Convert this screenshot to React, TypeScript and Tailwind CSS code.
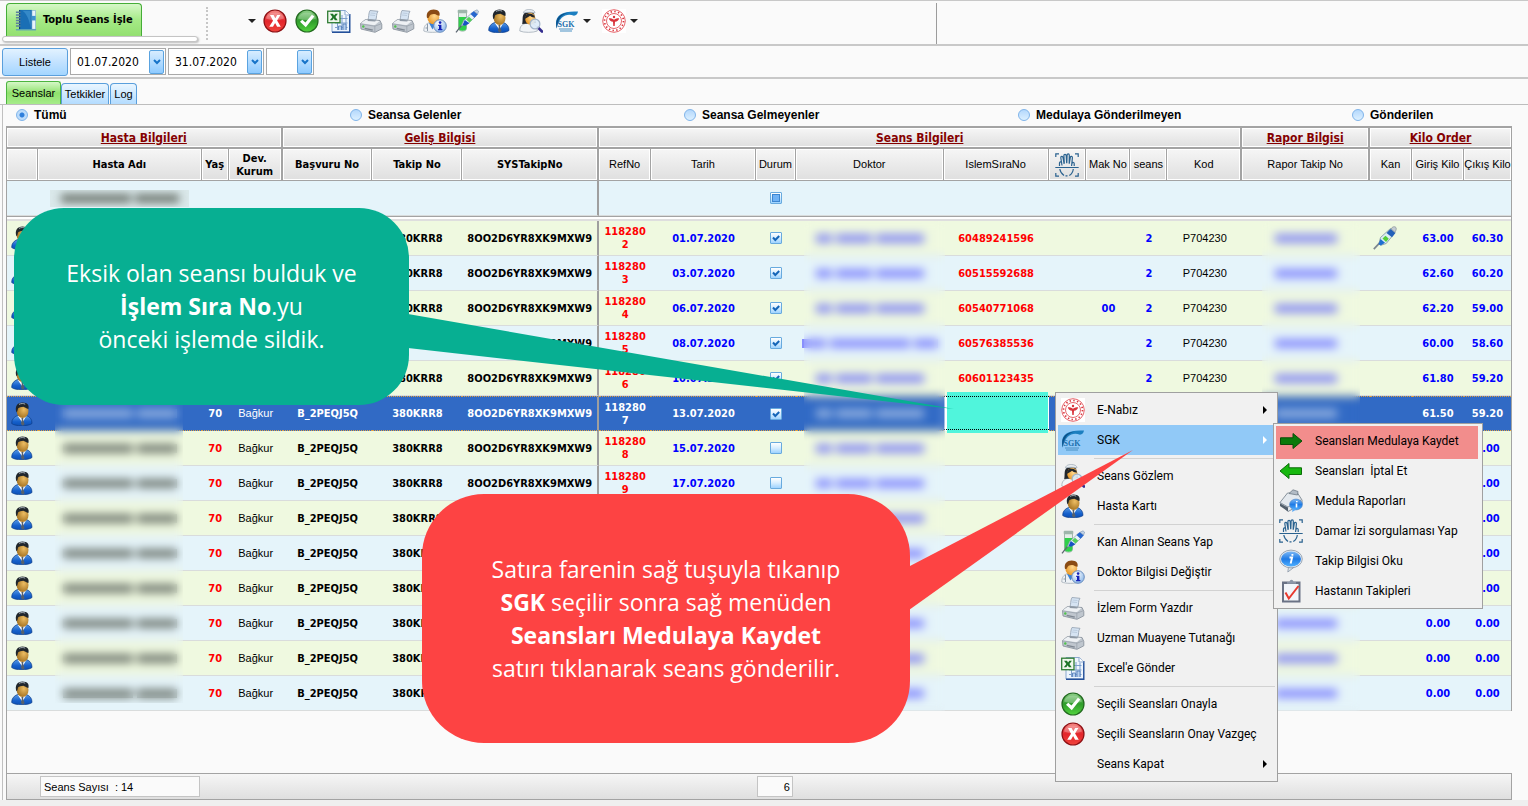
import type { ReactNode } from "react";

const tahoma = "font-['DejaVu_Sans_Condensed','Noto_Sans',sans-serif]";
const sans = "font-['Liberation_Sans',sans-serif]";
const segoe = "font-['Open_Sans','Noto_Sans',sans-serif]";
const menuFont = "font-['Roboto','Noto_Sans',sans-serif]";

/* ---------- Icons ---------- */

function Svg({ children, size = "size-6" }: { children: ReactNode; size?: string }) {
  return (
    <svg viewBox="0 0 24 24" className={`${size} shrink-0`} aria-hidden="true">
      {children}
    </svg>
  );
}

function IconDefs() {
  return (
    <svg className="absolute size-0" aria-hidden="true">
      <defs>
        <linearGradient id="gRed" x1="0" y1="0" x2="0" y2="1">
          <stop offset="0" stopColor="#f58a86" />
          <stop offset="0.5" stopColor="#e3252b" />
          <stop offset="1" stopColor="#f0443c" />
        </linearGradient>
        <linearGradient id="gGreen" x1="0" y1="0" x2="0" y2="1">
          <stop offset="0" stopColor="#8fd08a" />
          <stop offset="0.5" stopColor="#2f9c2b" />
          <stop offset="1" stopColor="#52d43e" />
        </linearGradient>
        <linearGradient id="gBlue" x1="0" y1="0" x2="0" y2="1">
          <stop offset="0" stopColor="#5a9be4" />
          <stop offset="0.6" stopColor="#1560cc" />
          <stop offset="1" stopColor="#0b4fb4" />
        </linearGradient>
        <radialGradient id="gSkin" cx="0.6" cy="0.4" r="0.7">
          <stop offset="0" stopColor="#edbd62" />
          <stop offset="1" stopColor="#9c6a1a" />
        </radialGradient>
        <radialGradient id="gFace" cx="0.6" cy="0.4" r="0.7">
          <stop offset="0" stopColor="#ffd890" />
          <stop offset="1" stopColor="#e8921c" />
        </radialGradient>
        <radialGradient id="gInfo" cx="0.4" cy="0.3" r="0.8">
          <stop offset="0" stopColor="#ffffff" />
          <stop offset="1" stopColor="#7fb0e6" />
        </radialGradient>
        <linearGradient id="gBubble" x1="0" y1="0" x2="0" y2="1">
          <stop offset="0" stopColor="#7db8f5" />
          <stop offset="0.5" stopColor="#1f7be6" />
          <stop offset="1" stopColor="#4fb0ff" />
        </linearGradient>
      </defs>
    </svg>
  );
}

const CancelIcon = () => (
  <Svg>
    <circle cx="12" cy="12" r="11" fill="url(#gRed)" stroke="#8d1014" strokeWidth="1.2" />
    <path d="M3 9.500a9.300 8 0 0 1 18 0q-9 3-18 0" fill="#fff" opacity="0.25" />
    <path d="M7 6h3.600l1.700 3.300L14.200 6h3.200l-3.300 5.600 3.700 6.200h-3.700l-2-3.700-2.100 3.700H6.200l3.800-6.100z" fill="#fff" />
  </Svg>
);

const ApproveIcon = () => (
  <Svg>
    <circle cx="12" cy="12" r="11" fill="url(#gGreen)" stroke="#22691f" strokeWidth="1.2" />
    <path d="M3 9.500a9.300 8 0 0 1 18 0q-9 3-18 0" fill="#fff" opacity="0.25" />
    <path d="M5 12.800l2.300-2 3.100 2.800 6.500-7.900 2.400 1.700-8.500 10.800z" fill="#fff" />
  </Svg>
);

const ExcelIcon = () => (
  <Svg>
    <path d="M5 1.500h13.500L22.500 6v17H5z" fill="#eef5fd" stroke="#8aa8cf" />
    <path d="M22.800 5v18.300H5" fill="none" stroke="#24509a" strokeWidth="1.400" />
    <path d="M18 1.500V6h4.500" fill="#fff" stroke="#8aa8cf" />
    <path d="M8 9.500h12.500M8 14h12.500M8 18.500h12.500M10.500 7v14M15 6v15M19 7v14" stroke="#7d9fcc" strokeWidth="1" />
    <path d="M11.500 21v-4h3v4M16 21v-6h3v6" fill="#b7cfee" stroke="#4d78b8" strokeWidth="0.800" />
    <rect x="0.700" y="2.200" width="12.300" height="11.500" fill="#f1f8ee" stroke="#2f7d34" strokeWidth="1.300" />
    <path d="M3 4.800h3l1 1.800 1.400-1.800h2.500L8.400 8l2.300 3.300H7.900L6.700 9.200l-1.400 2.100H2.800L5.400 8z" fill="#1d7527" />
  </Svg>
);

const PrinterIcon = () => (
  <Svg>
    <path d="M9 10.500c1-2 .3-6 2-9l8 .8c-2 2.500-1 6-2.300 9z" fill="#d6e4f3" stroke="#98a6b5" strokeWidth="0.900" />
    <path d="M11.500 4l5 .5M11 6l5 .5" stroke="#b4c5d8" strokeWidth="0.800" />
    <path d="M1.500 14.500L6.500 10.500l14.500 1 1.800 4v4.300L16 23.300 2 20z" fill="#bfc6ce" stroke="#8b949e" strokeWidth="0.900" />
    <path d="M1.800 14.300l5-3.500L20.700 12l-5 4.300z" fill="#eef1f4" />
    <path d="M9 10.500l8 .7-.8 1.300-7.700-.6z" fill="#8d98a4" />
    <path d="M15.800 16.300v6.400M2 15l13.800 2.200 6.700-2.500" fill="none" stroke="#9ba3ad" strokeWidth="0.800" />
    <path d="M5.500 20l8 1.800.5-1.300-8-1.700z" fill="#7e8791" />
    <circle cx="4.300" cy="17.500" r="1.200" fill="#4fc24c" />
  </Svg>
);

const PersonIcon = () => (
  <Svg>
    <path d="M1.700 21.500C1.700 17 4 15 7.500 13.500h9c3.500 1.500 5.500 3.500 5.500 8-3.500 3-17 3-20.300 0z" fill="url(#gBlue)" stroke="#0b3b86" strokeWidth="0.700" />
    <path d="M7.700 13.800l4.700 7 4-7z" fill="#fff" />
    <path d="M11.300 16h2.200l-.4 1.700 1.500 4.300-1.700 1.700-2-1.700.9-4.300z" fill="#56606c" />
    <ellipse cx="12.600" cy="9" rx="5.900" ry="7" fill="url(#gSkin)" />
    <path d="M6.500 10.500C4.300 4.500 7.500.5 12.500.5c5 0 7 2.800 5.900 6.500-2.200-.3-3.700-1.900-5-2.200-2.200.4-4.300.6-5.200 1.500-.6 1.200-.5 3.200-1.700 4.200z" fill="#20262c" />
    <path d="M9 2.400c2-1.100 4.500-1.100 6.200-.2" stroke="#a7b0b8" fill="none" strokeWidth="1" />
  </Svg>
);

const InfoBadge = () => (
  <g>
    <circle cx="17" cy="17" r="6.300" fill="url(#gInfo)" stroke="#6185b8" strokeWidth="0.900" />
    <circle cx="17.100" cy="13.600" r="1.300" fill="#1522b8" />
    <path d="M15.200 15.800h3.200v4.200h1v1.300h-4.300V20h.9v-2.900h-.8z" fill="#1522b8" />
  </g>
);

const DoctorInfoIcon = () => (
  <Svg>
    <path d="M.8 22c0-5 2-7 5.500-8.500h7c3 1.500 5 3.500 5 8.500-4 1.800-14 1.800-17.500 0z" fill="#eef2f6" stroke="#a3adb8" strokeWidth="0.800" />
    <path d="M6 14l3.500 6.500 3.500-6.500z" fill="#3b82d6" />
    <path d="M4.500 15v7M4.500 19h-2" stroke="#8b98a6" fill="none" />
    <ellipse cx="10.300" cy="8.500" rx="5.900" ry="6.800" fill="url(#gFace)" />
    <path d="M4 9C2.700 3.500 6.500.5 10.700.6c4.700.1 6.800 2.700 5.800 6.200-2.200-.2-3.200-1.700-5.300-1.900-2.700-.1-4.700.7-5.400 3.900z" fill="#8a4b14" />
    <InfoBadge />
  </Svg>
);

const TubeIcon = () => (
  <Svg>
    <path d="M3.500 3.500v16c0 3.500 8 3.500 8 0v-16z" fill="#e3efe9" stroke="#8fa69b" strokeWidth="0.800" />
    <path d="M3.700 8h7.600v11.500c0 3-7.600 3-7.600 0z" fill="#2fd04a" />
    <rect x="2.700" y="0.800" width="9.600" height="3.400" rx="1" fill="#9eb6ab" />
    <path d="M1 23.300l6-7.500" stroke="#5b6570" strokeWidth="1.300" />
    <path d="M6.300 16.800l2.400-5.300 8.500-8 4 3.300-8.600 8.300z" fill="#e9f4fb" stroke="#7e93a8" strokeWidth="0.700" />
    <path d="M7.500 16l2.300-5 4.600 3.300-4.400 2.500z" fill="#1752c4" />
    <path d="M11 10.500l3-2.700 3.300 3-2.800 2.700z" fill="#55cf5a" />
    <path d="M15.500 5l3.400-3 4 3.300-3.400 3.500z" fill="#2566cf" />
    <path d="M19 2.300l3-1.500 1.600 1.400-1 2.800z" fill="#c3d4e8" stroke="#7890ad" strokeWidth="0.600" />
  </Svg>
);

const NurseIcon = () => (
  <Svg>
    <path d="M.8 22c0-4.500 2-6.500 5.500-7.500h6.500c3.500 1 5.500 3 5.500 7.500-4 1.800-13.500 1.800-17.500 0z" fill="#f1f4f7" stroke="#a3adb8" strokeWidth="0.800" />
    <path d="M3.200 15C4.300 10 2.500 7 6 3.500h8c3 3.500 1.700 7.500 3.200 10.500z" fill="#22262c" />
    <path d="M4.500 4c0-2.300 3-3.700 6-3.500 3 0 5.500 1.300 5.500 3.500-2.800-1-8.500-1-11.500 0z" fill="#e8edf2" stroke="#9aa5b0" strokeWidth="0.700" />
    <ellipse cx="11.300" cy="9.800" rx="5.100" ry="6" fill="url(#gFace)" />
    <path d="M5.800 10c.3-3.500 2-5 4-5.500 2.500.3 5.500 1 6.300 4-2.500.3-4.100-.8-5.100-1.700-1.200.9-3 2-5.200 3.200z" fill="#22262c" />
    <path d="M19 18.500l4 4" stroke="#332c8e" strokeWidth="2.600" strokeLinecap="round" />
    <circle cx="16" cy="15" r="4.900" fill="#dcebf8" fillOpacity="0.900" stroke="#a3b5c9" strokeWidth="1.200" />
  </Svg>
);

const SgkIcon = () => (
  <Svg>
    <path d="M1.800 19.500C-1.500 8 5 1.500 23 2.500c-.5 2.600-1.700 4-4 4.200C12 4.300 4.500 6.500 1.800 19.500z" fill="#1c7fc0" />
    <path d="M1.800 19.500C-.5 10.500 4 4.500 14 3.600 6.500 5.500 2.500 10 1.800 19.500z" fill="#0d4f86" />
    <text x="2.500" y="18" fontSize="8" fontWeight="bold" fontFamily="Liberation Serif, serif" fill="#1b70ae">
      SGK
    </text>
    <path d="M4 20h14M5 22h12" stroke="#4a91c4" strokeWidth="1" />
  </Svg>
);

const MinistryIcon = () => (
  <Svg>
    <rect width="24" height="24" fill="#fff" />
    <circle cx="12" cy="12" r="11.300" fill="none" stroke="#e2555b" strokeWidth="0.900" />
    <circle cx="12" cy="12" r="9.500" fill="none" stroke="#d9343c" strokeWidth="1.700" strokeDasharray="1.400 2.330" />
    <circle cx="12" cy="12" r="7.500" fill="none" stroke="#e2555b" strokeWidth="0.900" />
    <path d="M6.800 9.300c2 0 3.700.3 5.200 1.400 1.500-1.100 3.200-1.400 5.200-1.400-.6 2.200-2 3.200-4.200 3.500L12.700 17h-1.400L11 12.800c-2.200-.3-3.600-1.300-4.200-3.500z" fill="#d9343c" />
    <circle cx="12" cy="8" r="1.200" fill="#d9343c" />
  </Svg>
);

const HandIcon = () => (
  <Svg>
    <g fill="none" stroke="#2a628f" strokeWidth="1.200">
      <path d="M.8 4V.8H4M20 .8h3.200V4M.8 20v3.200H4M20 23.200h3.200V20" />
      <path d="M.3 14.500h23.400" strokeWidth="1" />
      <path d="M4.500 13V10c0-1.600 2-1.600 2.300 0M7 12.500L5.800 4.800c-.1-1.700 1.900-1.900 2.200-.3l1.100 6.300M9.300 10.500L8.900 2.600c0-1.700 2.200-1.700 2.300 0l.5 7.700M11.800 10.300l.3-8.200c.1-1.700 2.200-1.600 2.200.1l-.1 8.500M14.300 10.500l1-6.200c.3-1.600 2.300-1.200 2.100.4l-.8 8.300M17 10.500c.5-1.600 2.300-1.200 2.200.3v2.200" />
      <path d="M4.800 16c.5 3.300 2.200 5 4.200 6.500M18.300 16c-.3 3-1.500 5-4 6.500M10.500 22.800h2" />
    </g>
  </Svg>
);

const ThermometerIcon = () => (
  <Svg>
    <path d="M.8 23.200l7-7.600" stroke="#7c868f" strokeWidth="1.700" />
    <path d="M6 17.500l1.500-6L17.500 2.500l4.700 4-9 11-5.500 1.800z" fill="#dceef3" stroke="#6d8593" strokeWidth="0.700" />
    <path d="M5.500 18.300l2-5.300 4.500 3.800-4.300 2.700z" fill="#1f6fd0" />
    <path d="M9.500 12.500l3-2.800 3.300 3-2.800 3.200z" fill="#55cf3a" />
    <path d="M13.500 7l4-4 4.900 4-3.400 4.300z" fill="#2361b9" />
    <path d="M18.300 3c.6-2.800 4.400-3 4.900-.9.300 1.500-.5 2.800-1.300 4.200z" fill="#c4ccd3" stroke="#7a858f" strokeWidth="0.600" />
  </Svg>
);

const ArrowIcon = ({ left = false }: { left?: boolean }) => (
  <Svg>
    {left ? (
      <path d="M1 12l9-7.500v4.300h12.500v6.700H10v4z" fill="#17b80f" stroke="#0b6d08" />
    ) : (
      <path d="M23 12l-9-7.500v4.300H1.500v6.700H14v4z" fill="#0a7a0a" stroke="#0b4d08" />
    )}
  </Svg>
);

const ReportsIcon = () => (
  <Svg>
    <path d="M1 13.500L8.500 4h10l4.500 7v4L9 22.500z" fill="#e4e9ee" stroke="#6f7b87" strokeWidth="0.800" />
    <path d="M1 13.500L9 18l13-7" fill="none" stroke="#8b97a3" />
    <path d="M1 14.500v2.500l8 5.500v-4z" fill="#525f6c" />
    <path d="M10 4.500L14 .8l5 1.700-.5 3.500z" fill="#b3bcc6" stroke="#6f7b87" strokeWidth="0.800" />
    <ellipse cx="17" cy="15.500" rx="6.400" ry="5.400" fill="url(#gBubble)" stroke="#4f87c9" strokeWidth="0.700" />
    <path d="M13.500 19l-.3 4 4-2.500z" fill="#5aaaf5" />
    <path d="M17.800 12v1.300M17.500 14.500v4" stroke="#fff" strokeWidth="1.600" />
  </Svg>
);

const BubbleIcon = () => (
  <Svg>
    <path d="M9.500 18l-.7 5 6-4.500z" fill="#dfe6ee" stroke="#8a97a6" strokeWidth="0.800" />
    <ellipse cx="12" cy="10" rx="11.300" ry="8.900" fill="#dfe6ee" stroke="#8a97a6" strokeWidth="0.800" />
    <ellipse cx="12" cy="10" rx="10" ry="7.600" fill="url(#gBubble)" />
    <path d="M10.500 8.500h2.600l-1.200 5h1M13.400 5v1.800" fill="none" stroke="#fff" strokeWidth="1.900" />
  </Svg>
);

const ClipboardIcon = () => (
  <Svg>
    <rect x="3" y="2.500" width="18.500" height="21" fill="#6a7285" />
    <rect x="5" y="5" width="14.500" height="16.500" fill="#f2f5fa" />
    <path d="M8 4.700V3h2.500c.3-3 3.700-3 4 0H17v1.700z" fill="#8c96a8" />
    <path d="M6.500 13.500l3.300 6L19.500 7" fill="none" stroke="#e8392f" strokeWidth="2" />
  </Svg>
);

const NotebookIcon = () => (
  <Svg size="size-[22px]">
    <rect x="4.500" y="1" width="14" height="21" fill="#1a6fb5" />
    <rect x="18.500" y="1.500" width="4" height="20.500" fill="#e9f3fb" stroke="#6ea5d0" strokeWidth="0.600" />
    <path d="M18.500 7.500h4v5h-4z" fill="#3f94d0" />
    <path d="M5 1v21" stroke="#083e6e" strokeWidth="1.200" />
    <path d="M1 3.500h5M1 6.500h5M1 9.500h5M1 12.500h5M1 15.500h5M1 18.500h5" stroke="#5c7f9e" strokeWidth="1.500" />
    <path d="M1 22.700h22" stroke="#4e93c6" strokeWidth="1.200" />
    <path d="M8 2c4 2 8 10 9 19V2z" fill="#4fa3dc" opacity="0.500" />
  </Svg>
);

const Caret = () => (
  <svg viewBox="0 0 8 4" className="h-1 w-2 shrink-0" aria-hidden="true">
    <path d="M0 0h8L4 4z" fill="#222" />
  </svg>
);

/* ---------- Small controls ---------- */

function ToolButton({ label, children }: { label: string; children: ReactNode }) {
  return (
    <button type="button" aria-label={label} className="flex h-8 w-8 items-center justify-center">
      {children}
    </button>
  );
}

function DropMark() {
  return (
    <span className="pointer-events-none absolute top-0.5 right-0.5 flex h-6 w-[15px] items-center justify-center rounded-[2px] border border-[#5aa3e0] bg-linear-to-b from-[#d8edff] via-[#b4dcff] to-[#8ecaff]">
      <svg viewBox="0 0 8 6" className="h-1.5 w-2" aria-hidden="true">
        <path d="M1 1l3 3 3-3" fill="none" stroke="#1673c9" strokeWidth="2" />
      </svg>
    </span>
  );
}

function DateBox({ label, value }: { label: string; value: string }) {
  return (
    <label className="relative block">
      <input
        type="text"
        aria-label={label}
        defaultValue={value}
        className={`${tahoma} block h-[27px] w-24 border border-[#a9a9a9] bg-white px-1.5 text-[12px] text-black`}
      />
      <DropMark />
    </label>
  );
}

type CheckState = "on" | "off" | "mixed";

function Check({ state, label }: { state: CheckState; label: string }) {
  return (
    <span className="relative mx-auto block size-3">
      <input
        type="checkbox"
        aria-label={label}
        defaultChecked={state === "on"}
        className="block size-3 appearance-none rounded-[1px] border border-[#68aade] bg-linear-to-b from-white via-[#d6edff] to-[#9ed3ff]"
      />
      {state === "on" && (
        <svg viewBox="0 0 12 12" className="pointer-events-none absolute inset-0" aria-hidden="true">
          <path d="M3 5.500l2.300 2.500L9.200 4" fill="none" stroke="#1565b8" strokeWidth="2" />
        </svg>
      )}
      {state === "mixed" && (
        <span className="pointer-events-none absolute inset-[2px] border border-[#3d86d0] bg-[#6fb2f5]" />
      )}
    </span>
  );
}

/* Redacted value: soft bars standing in for words */
function Redacted({ tone, words }: { tone: "dark" | "blue" | "light"; words: string[] }) {
  const color = tone === "dark" ? "bg-[#606860]/85" : tone === "blue" ? "bg-[#3c3cff]/55" : "bg-white/45";
  return (
    <span className="flex items-center justify-center gap-1">
      {words.map((w, i) => (
        <span key={i} className={`h-[9px] ${w} ${color}`} />
      ))}
    </span>
  );
}

/* ---------- Data ---------- */

interface Row {
  yas?: string;
  kurum?: string;
  basvuru?: string;
  sys?: string;
  ref?: string;
  date?: string;
  done?: boolean;
  islem?: string;
  mak?: string;
  seans?: string;
  kod?: string;
  kan?: boolean;
  giris?: string;
  cikis: string;
}

const takip = "380KRR8";
const sys = "8OO2D6YR8XK9MXW9";
const person = { yas: "70", kurum: "Bağkur", basvuru: "B_2PEQJ5Q" };
const session = { sys, done: true, seans: "2", kod: "P704230" };

const rows: Row[] = [
  { ...session, ref: "1182802", date: "01.07.2020", islem: "60489241596", kan: true, giris: "63.00", cikis: "60.30" },
  { ...session, ref: "1182803", date: "03.07.2020", islem: "60515592688", giris: "62.60", cikis: "60.20" },
  { ...session, ref: "1182804", date: "06.07.2020", islem: "60540771068", mak: "00", giris: "62.20", cikis: "59.00" },
  { ...session, ref: "1182805", date: "08.07.2020", islem: "60576385536", giris: "60.00", cikis: "58.60" },
  { ...session, ref: "1182806", date: "10.07.2020", islem: "60601123435", giris: "61.80", cikis: "59.20" },
  { ...person, sys, ref: "1182807", date: "13.07.2020", done: true, giris: "61.50", cikis: "59.20" },
  { ...person, sys, ref: "1182808", date: "15.07.2020", cikis: "0.00" },
  { ...person, sys, ref: "1182809", date: "17.07.2020", cikis: "0.00" },
  { ...person, cikis: "0.00" },
  { ...person, cikis: "0.00" },
  { ...person, cikis: "0.00" },
  { ...person, giris: "0.00", cikis: "0.00" },
  { ...person, giris: "0.00", cikis: "0.00" },
  { ...person, giris: "0.00", cikis: "0.00" },
];

const SELECTED = 5;
const colWidths = [31, 164, 27, 54, 90, 90, 137, 52, 105, 40, 148, 105, 38, 44, 37, 75, 128, 42, 52, 47];

const groups = [
  { title: "Hasta Bilgileri", span: 4 },
  { title: "Geliş Bilgisi", span: 3 },
  { title: "Seans Bilgileri", span: 9 },
  { title: "Rapor Bilgisi", span: 1 },
  { title: "Kilo Order", span: 3 },
];

const heads: { title: string; bold?: boolean; thick?: boolean }[] = [
  { title: "" },
  { title: "Hasta Adı", bold: true },
  { title: "Yaş", bold: true },
  { title: "Dev. Kurum", bold: true, thick: true },
  { title: "Başvuru No", bold: true },
  { title: "Takip No", bold: true },
  { title: "SYSTakipNo", bold: true, thick: true },
  { title: "RefNo" },
  { title: "Tarih" },
  { title: "Durum" },
  { title: "Doktor" },
  { title: "IslemSıraNo" },
  { title: "hand" },
  { title: "Mak No" },
  { title: "seans" },
  { title: "Kod", thick: true },
  { title: "Rapor Takip No", thick: true },
  { title: "Kan" },
  { title: "Giriş Kilo" },
  { title: "Çıkış Kilo" },
];

function SessionRow({ row, index }: { row: Row; index: number }) {
  const sel = index === SELECTED;
  const line = sel
    ? "relative h-[35px] border-t border-b border-dotted border-[#e0a040] p-0"
    : "relative h-[35px] border-b border-[#d9dcdc] p-0";
  const red = sel ? "text-white" : "text-[#ff0000]";
  const blue = sel ? "text-white" : "text-[#0000ff]";
  const patch = "absolute top-0 z-10 h-[490px] backdrop-blur-[5px]";
  const first = index === 0;
  const bg = sel ? "bg-[#316ac5] text-white" : index % 2 === 0 ? "bg-[#eff9e0] text-black" : "bg-[#e5f4fa] text-black";
  return (
    <tr className={`${bg} text-center text-[11px] leading-[13px] font-bold`}>
      <td className={line}>
        <span className="flex justify-center">
          <PersonIcon />
        </span>
      </td>
      <td className={line}>
        <span className="block">
          <Redacted tone={sel ? "light" : "dark"} words={["w-[70px]", "w-10"]} />
        </span>
        {first && <span className="absolute top-0 left-[17px] z-10 h-[482px] w-32 backdrop-blur-[5px]" />}
      </td>
      <td className={`${line} ${red}`}>{row.yas}</td>
      <td className={`${line} ${sans} font-normal`}>{row.kurum}</td>
      <td className={line}>{row.basvuru}</td>
      <td className={line}>{takip}</td>
      <td className={`${line} border-r-2 border-r-[#9f9f9f] [border-right-style:solid]`}>{row.sys}</td>
      <td className={`${line} ${red} break-all`}>
        <span className="mx-auto block w-11">{row.ref}</span>
      </td>
      <td className={`${line} ${blue}`}>{row.date}</td>
      <td className={line}>
        <Check state={row.done ? "on" : "off"} label={`Durum ${index + 1}`} />
      </td>
      <td className={line}>
        <Redacted tone={sel ? "light" : "blue"} words={index === 3 ? ["w-6", "w-20", "w-6"] : ["w-4", "w-9", "w-12"]} />
        {first && <span className={`${patch} left-2 w-[141px]`} />}
      </td>
      {sel ? (
        <td className="relative h-[35px] bg-white p-0">
          <span className="absolute -top-1 right-px -bottom-[2px] left-[3px] bg-[#50f5dc]" />
          <span className="absolute inset-x-0 top-0 bottom-px border-y border-dotted border-black" />
        </td>
      ) : (
        <td className={`${line} ${red}`}>{row.islem}</td>
      )}
      <td className={line} />
      <td className={`${line} ${blue}`}>{row.mak}</td>
      <td className={`${line} ${blue}`}>{row.seans}</td>
      <td className={`${line} ${sans} font-normal`}>{row.kod}</td>
      <td className={line}>
        <Redacted tone={sel ? "light" : "blue"} words={["w-[62px]"]} />
        {first && <span className={`${patch} left-5 w-[98px]`} />}
      </td>
      <td className={line}>
        {row.kan && (
          <span className="flex justify-center pr-3">
            <ThermometerIcon />
          </span>
        )}
      </td>
      <td className={`${line} ${blue}`}>{row.giris}</td>
      <td className={`${line} ${blue}`}>{row.cikis}</td>
    </tr>
  );
}

function SessionTable() {
  const cell = "bg-linear-to-b from-[#f6f6f6] to-[#dfdfdf] shadow-[inset_1px_1px_0_#fff,inset_-1px_-1px_0_#fff]";
  return (
    <table className={`${tahoma} w-full table-fixed border-separate border-spacing-0 border-t-2 border-r border-l border-[#a3a3a3]`}>
      <colgroup>
        {colWidths.map((w, i) => (
          <col key={i} style={{ width: `${(w / 1506) * 100}%` }} />
        ))}
      </colgroup>
      <thead>
        <tr>
          {groups.map((g) => (
            <th
              key={g.title}
              colSpan={g.span}
              className={`${cell} h-[21px] border-r-2 border-b-2 border-[#a3a3a3] p-0 text-[12px] leading-4 font-bold text-[#850000] underline last:border-r-0`}
            >
              {g.title}
            </th>
          ))}
        </tr>
        <tr>
          {heads.map((h, i) => (
            <th
              key={i}
              className={`${cell} h-8 border-b border-[#a3a3a3] p-0 text-[11px] leading-[13px] text-black last:border-r-0 ${h.thick ? "border-r-2" : "border-r"} ${h.bold ? "font-bold" : `${sans} font-normal whitespace-nowrap`}`}
            >
              {h.title === "hand" ? (
                <span className="flex justify-center">
                  <HandIcon />
                </span>
              ) : (
                h.title
              )}
            </th>
          ))}
        </tr>
      </thead>
      <tbody>
        <tr className="bg-[#e5f4fa]">
          <td colSpan={7} className="h-[35px] border-r-2 border-b border-r-[#9f9f9f] border-b-[#d9dcdc] p-0">
            <span className="ml-[43px] flex h-[17px] w-[139px] items-center justify-center overflow-hidden bg-[#cfdcda]/50">
              <span className="flex blur-[4px]">
                <Redacted tone="dark" words={["w-[70px]", "w-11"]} />
              </span>
            </span>
          </td>
          <td colSpan={2} className="border-b border-[#d9dcdc] p-0" />
          <td className="border-b border-[#d9dcdc] p-0">
            <Check state="mixed" label="Durum filtresi" />
          </td>
          <td colSpan={10} className="border-b border-[#d9dcdc] p-0" />
        </tr>
        <tr>
          <td colSpan={20} className="h-[5px] border-t border-b-2 border-t-[#a3a3a3] border-b-[#dedede] bg-white p-0" />
        </tr>
        {rows.map((r, i) => (
          <SessionRow key={i} row={r} index={i} />
        ))}
      </tbody>
    </table>
  );
}

/* ---------- Menus ---------- */

interface Item {
  label: string;
  icon?: ReactNode;
  more?: boolean;
  active?: boolean;
}

const mainMenu: Item[][] = [
  [
    { label: "E-Nabız", icon: <MinistryIcon />, more: true },
    { label: "SGK", icon: <SgkIcon />, more: true, active: true },
  ],
  [
    { label: "Seans Gözlem", icon: <NurseIcon /> },
    { label: "Hasta Kartı", icon: <PersonIcon /> },
  ],
  [
    { label: "Kan Alınan Seans Yap", icon: <TubeIcon /> },
    { label: "Doktor Bilgisi Değiştir", icon: <DoctorInfoIcon /> },
  ],
  [
    { label: "İzlem Form Yazdır", icon: <PrinterIcon /> },
    { label: "Uzman Muayene Tutanağı", icon: <PrinterIcon /> },
    { label: "Excel'e Gönder", icon: <ExcelIcon /> },
  ],
  [
    { label: "Seçili Seansları Onayla", icon: <ApproveIcon /> },
    { label: "Seçili Seansların Onay Vazgeç", icon: <CancelIcon /> },
    { label: "Seans Kapat", more: true },
  ],
];

const sgkMenu: Item[] = [
  { label: "Seansları Medulaya Kaydet", icon: <ArrowIcon />, active: true },
  { label: "Seansları  İptal Et", icon: <ArrowIcon left /> },
  { label: "Medula Raporları", icon: <ReportsIcon /> },
  { label: "Damar İzi sorgulaması Yap", icon: <HandIcon /> },
  { label: "Takip Bilgisi Oku", icon: <BubbleIcon /> },
  { label: "Hastanın Takipleri", icon: <ClipboardIcon /> },
];

function MenuItem({ item }: { item: Item }) {
  return (
    <button
      type="button"
      role="menuitem"
      className={`flex h-[30px] w-full items-center pr-2 text-left text-[12px] whitespace-pre text-black ${item.active ? "bg-[#91c9f7]" : ""}`}
    >
      <span className="flex w-[30px] shrink-0 justify-center">{item.icon}</span>
      <span className="flex-1 pl-[9px]">{item.label}</span>
      {item.more && (
        <svg viewBox="0 0 4 8" className="h-2 w-1" aria-hidden="true">
          <path d="M0 0l4 4-4 4z" fill={item.active ? "#fff" : "#000"} />
        </svg>
      )}
    </button>
  );
}

function ContextMenu() {
  return (
    <div role="menu" className={`${menuFont} absolute top-[392px] left-[1055px] z-20 w-[223px] border border-[#a0a0a0] bg-[#f1f1f1] p-0.5`}>
      {mainMenu.map((section, i) => (
        <div key={i}>
          {i > 0 && (
            <div className="flex h-1.5 items-center pl-9">
              <hr className="w-full border-[#d2d2d2]" />
            </div>
          )}
          {section.map((item) => (
            <MenuItem key={item.label} item={item} />
          ))}
        </div>
      ))}
    </div>
  );
}

function SgkSubmenu() {
  return (
    <div role="menu" className={`${menuFont} absolute top-[423px] left-[1273px] z-20 w-[210px] border border-[#a0a0a0] bg-[#f1f1f1] p-0.5`}>
      <div className="absolute top-0.5 left-0.5 h-[33px] w-[202px] bg-[#f28d8c]" />
      {sgkMenu.map((item) => (
        <div key={item.label} className="relative">
          <MenuItem item={{ ...item, active: false }} />
        </div>
      ))}
    </div>
  );
}

/* ---------- Callouts ---------- */

function Callouts() {
  return (
    <>
      <svg className="pointer-events-none absolute top-0 left-0 z-30 h-[806px] w-[1528px]" viewBox="0 0 1528 806" aria-hidden="true">
        <path d="M408 314L954 409 408 348z" fill="#07af92" />
        <path d="M909 566.500L1133 450 909 610z" fill="#fd4343" />
      </svg>
      <p className={`${segoe} absolute top-[208px] left-[14px] z-30 flex h-[197px] w-[395px] flex-col items-center justify-center rounded-[50px] bg-[#07af92] text-[23px] leading-[33px] text-white`}>
        <span>Eksik olan seansı bulduk ve</span>
        <span>
          <b>İşlem Sıra No</b>.yu
        </span>
        <span>önceki işlemde sildik.</span>
      </p>
      <p className={`${segoe} absolute top-[494px] left-[422px] z-30 flex h-[249px] w-[488px] flex-col items-center justify-center rounded-[62px] bg-[#fd4343] text-[23px] leading-[33px] text-white`}>
        <span>Satıra farenin sağ tuşuyla tıkanıp</span>
        <span>
          <b>SGK</b> seçilir sonra sağ menüden
        </span>
        <b>Seansları Medulaya Kaydet</b>
        <span>satırı tıklanarak seans gönderilir.</span>
      </p>
    </>
  );
}

/* ---------- Page ---------- */

const filters = ["Tümü", "Seansa Gelenler", "Seansa Gelmeyenler", "Medulaya Gönderilmeyen", "Gönderilen"];

export default function App() {
  return (
    <div className={`${sans} relative flex min-h-screen flex-col overflow-hidden bg-[#fafafa] text-[11px] text-black`}>
      <IconDefs />

      <header className="flex h-[46px] border-t border-b-2 border-[#c8c8c8] pt-0.5">
        <div className="flex w-[206px] flex-col pl-0.5">
          <button
            type="button"
            className={`${tahoma} ml-1 flex h-[33px] w-[136px] items-center gap-1.5 rounded-t-sm border border-b-0 border-[#45ad37] bg-linear-to-b from-[#d6f7c8] via-[#a5ea86] to-[#93e070] pl-2 text-[11px] font-bold whitespace-nowrap`}
          >
            <NotebookIcon />
            Toplu Seans İşle
          </button>
          <div className="h-1.5 w-[196px] rounded-sm border border-[#c4c4c4] bg-white shadow-[1px_1px_2px_#bbb]" />
        </div>
        <div className="my-1 border-l-2 border-dotted border-[#c6c6c6]" />
        <div className="flex h-9 items-center pl-10">
          <Caret />
          <div className="flex pl-[3px]">
            <ToolButton label="Vazgeç"><CancelIcon /></ToolButton>
            <ToolButton label="Onayla"><ApproveIcon /></ToolButton>
            <ToolButton label="Excel"><ExcelIcon /></ToolButton>
            <ToolButton label="Form yazdır"><PrinterIcon /></ToolButton>
            <ToolButton label="Tutanak yazdır"><PrinterIcon /></ToolButton>
            <ToolButton label="Doktor bilgisi"><DoctorInfoIcon /></ToolButton>
            <ToolButton label="Kan alınan"><TubeIcon /></ToolButton>
            <ToolButton label="Hasta kartı"><PersonIcon /></ToolButton>
            <ToolButton label="Gözlem"><NurseIcon /></ToolButton>
          </div>
          <div className="flex items-center pl-1">
            <ToolButton label="SGK"><SgkIcon /></ToolButton>
            <Caret />
          </div>
          <div className="flex items-center pl-[7px]">
            <ToolButton label="E-Nabız"><MinistryIcon /></ToolButton>
            <Caret />
          </div>
        </div>
        <div className="ml-[298px] border-l border-[#9c9c9c]" />
      </header>

      <section className="flex h-[33px] items-start gap-0.5 border-b-2 border-[#c8c8c8] pt-0.5 pl-0.5">
        <button
          type="button"
          className="h-7 w-[66px] rounded-[3px] border border-[#5a9fdc] bg-linear-to-b from-[#e2f2ff] via-[#c3e2ff] to-[#a3d6ff] text-[11px]"
        >
          Listele
        </button>
        <DateBox label="Başlangıç tarihi" value="01.07.2020" />
        <DateBox label="Bitiş tarihi" value="31.07.2020" />
        <label className="relative block">
          <select aria-label="Seans" className="block h-[27px] w-12 appearance-none border border-[#a9a9a9] bg-white" />
          <DropMark />
        </label>
      </section>

      <nav role="tablist" className="flex items-end border-b border-[#bdbdbd] pt-0.5 pl-1.5 text-[11px]">
        <button type="button" role="tab" aria-selected="true" className="h-[23px] w-[55px] rounded-t-[3px] border border-b-0 border-[#4cb540] bg-linear-to-b from-[#d5f7c6] via-[#8fe26c] to-[#a6ec8a]">
          Seanslar
        </button>
        <button type="button" role="tab" aria-selected="false" className="h-[21px] w-12 rounded-t-sm border border-b-0 border-[#5a9fdc] bg-linear-to-b from-[#eaf6ff] to-[#b3dcff]">
          Tetkikler
        </button>
        <button type="button" role="tab" aria-selected="false" className="ml-px h-[21px] w-[27px] rounded-t-sm border border-b-0 border-[#5a9fdc] bg-linear-to-b from-[#eaf6ff] to-[#b3dcff]">
          Log
        </button>
      </nav>

      <main className="ml-0.5 flex flex-1 flex-col border-l border-[#c0c0c0] pr-4 pl-[3px]">
        <fieldset className="-mr-4 grid h-[21px] grid-cols-[334fr_334fr_334fr_334fr_176fr] items-center pt-0.5 pl-2.5">
          {filters.map((f, i) => (
            <label key={f} className="flex items-center gap-1.5 text-[12px] leading-4 font-bold whitespace-nowrap">
              <input
                type="radio"
                name="filtre"
                defaultChecked={i === 0}
                className="size-3 appearance-none rounded-full border border-[#7fb4ea] bg-linear-to-b from-[#b4d8fc] to-[#dcf0ff] checked:bg-[radial-gradient(circle,#2f7fdc_0_2px,#bcdcfb_3px)]"
              />
              {f}
            </label>
          ))}
        </fieldset>

        <SessionTable />

        <div className="flex-1 border-l border-[#a3a3a3]" />

        <footer className="grid h-[27px] grid-cols-[33fr_160fr_558fr_36fr_719fr] items-center border border-[#a3a3a3] bg-linear-to-b from-[#f6f6f6] to-[#dfdfdf] text-[11px]">
          <span />
          <output className="h-[21px] border border-[#c4c4c4] bg-[#fafafa] px-[3px] leading-5 whitespace-pre">Seans Sayısı  : 14</output>
          <span />
          <output className="h-[21px] border border-[#c4c4c4] bg-[#fafafa] px-0.5 text-right leading-5">6</output>
          <span />
        </footer>
      </main>
      <div className="h-1.5 bg-[#efefef]" />

      <ContextMenu />
      <SgkSubmenu />
      <Callouts />
    </div>
  );
}
